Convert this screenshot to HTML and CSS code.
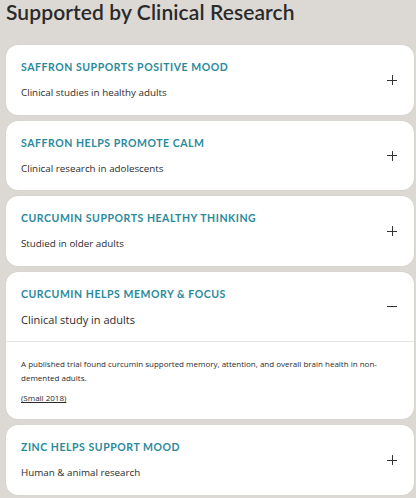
FILE: index.html
```
<!DOCTYPE html>
<html>
<head>
<title>Supported by Clinical Research</title>
<meta charset="utf-8">
<link rel="stylesheet" href="styles.css">
</head>
<body>
<h1>Supported by Clinical Research</h1>

<div class="card">
    <div class="head">
        <div class="text">
            <div class="title">SAFFRON SUPPORTS POSITIVE MOOD</div>
            <div class="sub">Clinical studies in healthy adults</div>
        </div>
        <span class="plus"></span>
    </div>
</div>

<div class="card">
    <div class="head">
        <div class="text">
            <div class="title">SAFFRON HELPS PROMOTE CALM</div>
            <div class="sub">Clinical research in adolescents</div>
        </div>
        <span class="plus"></span>
    </div>
</div>

<div class="card">
    <div class="head">
        <div class="text">
            <div class="title">CURCUMIN SUPPORTS HEALTHY THINKING</div>
            <div class="sub">Studied in older adults</div>
        </div>
        <span class="plus"></span>
    </div>
</div>

<div class="card open">
    <div class="head">
        <div class="text">
            <div class="title">CURCUMIN HELPS MEMORY &amp; FOCUS</div>
            <div class="sub big">Clinical study in adults</div>
        </div>
        <span class="minus"></span>
    </div>
    <div class="body">
        <p>A published trial found curcumin supported memory, attention, and overall brain health in non-demented adults.</p>
        <p><a href="#">(Small 2018)</a></p>
    </div>
</div>

<div class="card">
    <div class="head">
        <div class="text">
            <div class="title">ZINC HELPS SUPPORT MOOD</div>
            <div class="sub">Human &amp; animal research</div>
        </div>
        <span class="plus"></span>
    </div>
</div>
</body>
</html>
```

FILE: styles.css
```
body {
    margin: 0;
    padding: 0 2px 0 6px;
    background: #dcd9d4;
    font-family: "Open Sans", "Liberation Sans", sans-serif;
    color: #2b2b2b;
}
h1 {
    margin: 0;
    height: 45px;
    line-height: 24px;
    font-family: "Lato", "Liberation Sans", sans-serif;
    font-weight: 600;
    font-size: 21px;
    letter-spacing: 0.1px;
    color: #2a2a2a;
}
.card {
    background: white;
    border-radius: 12px;
    margin-bottom: 6px;
    box-shadow: 0 0 1px rgba(0,0,0,0.15);
}
.head {
    display: flex;
    align-items: center;
    padding: 15px 15px 14.5px 15px;
}
.text {
    flex: 1;
}
.title {
    font-family: "Lato", "Liberation Sans", sans-serif;
    font-weight: 700;
    font-size: 10.5px;
    letter-spacing: 0.55px;
    line-height: 14px;
    color: #2a8a9b;
    margin-bottom: 12px;
}
.sub {
    font-size: 9.8px;
    line-height: 14px;
    color: #2b2b2b;
}
.sub.big {
    font-size: 11px;
}
.plus, .minus {
    position: relative;
    width: 10px;
    height: 10px;
    margin-right: 2px;
}
.plus:before, .plus:after, .minus:before {
    content: "";
    position: absolute;
    background: #333;
}
.plus:before, .minus:before {
    left: 0;
    top: 4.5px;
    width: 10px;
    height: 1px;
}
.plus:after {
    left: 4.5px;
    top: 0;
    width: 1px;
    height: 10px;
}
.open .head {
    border-bottom: 1px solid #e6e6e6;
}
.body {
    padding: 15px 15px 14px 15px;
    font-size: 8px;
    line-height: 14px;
}
.body p {
    margin: 0 0 6px 0;
}
.body p:last-child {
    margin: 0;
}
.body a {
    color: #2b2b2b;
}
```
